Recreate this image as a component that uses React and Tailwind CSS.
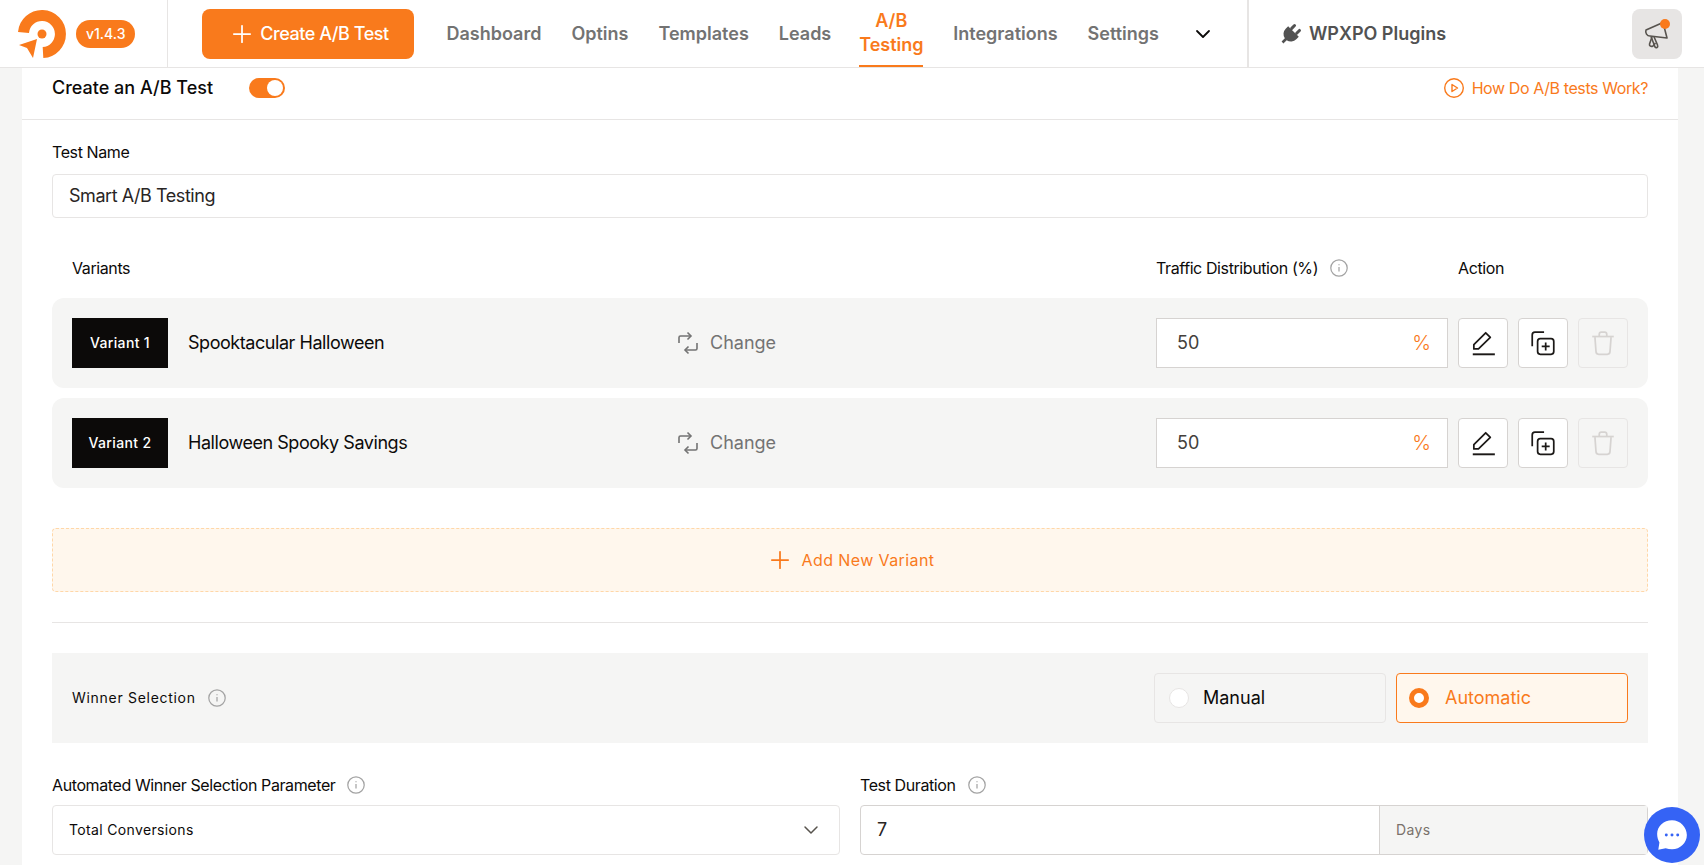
import React from 'react';
import { ChevronDown, Plus } from 'lucide-react';

const navItems = ['Dashboard', 'Optins', 'Templates', 'Leads'];

function Logo() {
  return (
    <svg viewBox="0 0 48 48" className="size-12 shrink-0">
      <path d="M5.5 22.5A18.5 18.5 0 1 1 25 42.5" fill="none" stroke="#f97a1c" strokeWidth="11" />
      <circle cx="24" cy="24" r="4.5" fill="#f97a1c" />
      <path d="M19 29L1 35L9 38L15 48Z" fill="#f97a1c" />
    </svg>
  );
}

function PlugIcon() {
  return (
    <svg viewBox="0 0 24 24" className="size-6 shrink-0 text-neutral-600" fill="currentColor">
      <g transform="rotate(45 12 12)">
        <rect x="7" y="2" width="3" height="7" rx="1.5" />
        <rect x="14" y="2" width="3" height="7" rx="1.5" />
        <path d="M4.5 8.5h15v3.5a7.5 7.5 0 0 1-6.2 7.4V24h-2.6v-4.6A7.5 7.5 0 0 1 4.5 12Z" />
      </g>
    </svg>
  );
}

function MegaphoneIcon() {
  return (
    <svg viewBox="0 0 28 30" className="w-7 h-8" fill="none" stroke="#57534e" strokeWidth="1.6" strokeLinejoin="round">
      <path d="M3 11L20 3.5L24 19L7 17C4 17 2 14 3 11Z" />
      <path d="M8 17.5L12 28C13 29.5 15.5 28.5 14.5 26L11 17.8" />
      <path d="M9 18L6.5 25C6.2 27 8 28 10 27L12.5 24" />
    </svg>
  );
}

function InfoIcon() {
  return (
    <svg viewBox="0 0 16 16" className="size-4.5 shrink-0" fill="none" stroke="#a3a3a3" strokeWidth="1.1">
      <circle cx="8" cy="8" r="7.3" />
      <path d="M8 7.200v4" />
      <path d="M8 4.600v.9" />
    </svg>
  );
}

function SwapIcon() {
  return (
    <svg viewBox="0 0 20 24" className="w-5 h-6 shrink-0" fill="none" stroke="#737373" strokeWidth="1.6">
      <path d="M1 12V6.500C1 5.500 1.500 5 2.500 5H13" />
      <path d="M9.500 1.500L13 5L9.500 8.500" />
      <path d="M19 12v5.500c0 1-.5 1.500-1.500 1.500H7" />
      <path d="M10.500 15.500L7 19L10.500 22.500" />
    </svg>
  );
}

function PencilIcon() {
  return (
    <svg viewBox="-1 -1 26 26" className="size-7" fill="none" stroke="#1c1917" strokeWidth="1.6" strokeLinejoin="round">
      <path d="M3.500 17.500V13.500L14.500 2.500L18.800 6.800L7.800 17.500Z" />
      <path d="M2.500 22.500H23" strokeWidth="1.800" />
    </svg>
  );
}

function CopyPlusIcon() {
  return (
    <svg viewBox="-1 -1 26 26" className="size-7" fill="none" stroke="#1c1917" strokeWidth="1.6">
      <path d="M2 15V4.500A2.500 2.500 0 0 1 4.500 2H13" />
      <rect x="7" y="8" width="15" height="14.500" rx="2.500" />
      <path d="M14.500 11.500v7.500M10.800 15.200h7.400" />
    </svg>
  );
}

function TrashIcon() {
  return (
    <svg viewBox="-1 -1 26 26" className="size-7" fill="none" stroke="#d6d3d1" strokeWidth="1.6">
      <path d="M2 6h20" />
      <path d="M8.500 6V4a2 2 0 0 1 2-2h3a2 2 0 0 1 2 2v2" />
      <path d="M4.500 6.500l1 13.500a2.500 2.500 0 0 0 2.500 2.500h8a2.500 2.500 0 0 0 2.500-2.500l1-13.500" />
    </svg>
  );
}

function VariantRow({ label, name }) {
  return (
    <div className="flex items-center bg-stone-100 rounded-xl px-5 h-22.5">
      <div className="flex-1 flex items-center gap-5">
        <div className="w-24 h-12.5 bg-stone-950 text-white text-sm font-medium tracking-wide flex items-center justify-center">
          {label}
        </div>
        <span className="text-lg tracking-tight text-stone-950">{name}</span>
      </div>
      <div className="w-120 flex items-center gap-3 pl-0.5 text-lg text-neutral-500">
        <SwapIcon />
        Change
      </div>
      <div className="w-118 flex gap-2.5">
        <div className="flex-1 h-12.5 bg-white border border-stone-300 flex items-center justify-between pl-5 pr-4 text-lg text-stone-700">
          50
          <span className="text-xl font-light text-[#f97a1c]">%</span>
        </div>
        <button className="size-12.5 bg-white border border-stone-300 rounded-sm flex items-center justify-center">
          <PencilIcon />
        </button>
        <button className="size-12.5 bg-white border border-stone-300 rounded-sm flex items-center justify-center">
          <CopyPlusIcon />
        </button>
        <button className="size-12.5 border border-stone-200 rounded-sm flex items-center justify-center">
          <TrashIcon />
        </button>
      </div>
    </div>
  );
}

export default function App() {
  return (
    <div className="relative flex flex-col h-screen overflow-hidden bg-stone-100 font-['Inter',sans-serif] text-stone-950">
      <header className="flex items-center shrink-0 h-17 bg-white border-b border-stone-200">
        <div className="flex items-center gap-2.5 h-full pl-4.5 pr-8 border-r border-stone-200">
          <Logo />
          <span className="bg-[#f97a1c] text-white text-sm font-medium rounded-full px-2.5 py-1">v1.4.3</span>
        </div>
        <button className="ml-8.5 w-53 h-12.5 bg-[#f97a1c] text-white text-lg font-medium tracking-tight rounded-lg flex items-center justify-center gap-1">
          <Plus className="size-7" strokeWidth={1.5} />
          Create A/B Test
        </button>
        <nav className="ml-8 flex items-center gap-7.5 h-full text-lg font-semibold text-neutral-500">
          {navItems.map((item) => (
            <a key={item}>{item}</a>
          ))}
          <a className="-ml-0.5 flex flex-col justify-center h-full w-16 text-center leading-6 text-[#f97a1c] border-b-2 border-[#f97a1c]">
            <span>A/B</span>
            <span>Testing</span>
          </a>
          <a>Integrations</a>
          <a>Settings</a>
          <ChevronDown className="ml-0.5 size-6 text-stone-950" strokeWidth={1.8} />
        </nav>
        <div className="ml-8 flex items-center gap-1.5 h-full pl-7.5 border-l-2 border-stone-200 text-lg font-semibold text-neutral-600">
          <PlugIcon />
          WPXPO Plugins
        </div>
        <div className="relative ml-auto mr-5.5 size-12.5 bg-stone-200 rounded-lg flex items-center justify-center">
          <MegaphoneIcon />
          <span className="absolute top-2.5 right-3 size-2.5 rounded-full bg-[#f97a1c]"></span>
        </div>
      </header>

      <main className="flex-1 ml-5.5 mr-6.5 bg-white">
        <div className="flex items-center justify-between h-13 pb-3 px-7.5 border-b border-stone-200">
          <div className="flex items-center gap-9">
            <span className="text-lg font-medium">Create an A/B Test</span>
            <span className="w-9 h-5 rounded-full bg-[#f97a1c] flex items-center justify-end pr-0.5">
              <span className="size-4 rounded-full bg-white"></span>
            </span>
          </div>
          <a className="flex items-center gap-2 text-base tracking-tight text-[#f97a1c]">
            <svg viewBox="0 0 20 20" className="size-5" fill="none" stroke="currentColor" strokeWidth="1.4">
              <circle cx="10" cy="10" r="9.300" />
              <path d="M8 6.500L13.500 10L8 13.500Z" strokeLinejoin="round" />
            </svg>
            How Do A/B tests Work?
          </a>
        </div>

        <div className="px-7.5 pt-5.5">
          <label className="block text-base tracking-tight leading-5 mb-3">Test Name</label>
          <div className="h-11 border border-stone-200 rounded-sm flex items-center px-4 text-lg tracking-tight text-stone-800">
            Smart A/B Testing
          </div>

          <div className="flex items-center px-5 mt-10 mb-5 h-5 text-base tracking-tight">
            <span className="flex-1">Variants</span>
            <div className="w-118 flex items-center">
              <span className="flex items-center gap-3 w-75.5">
                Traffic Distribution (%)
                <InfoIcon />
              </span>
              <span>Action</span>
            </div>
          </div>

          <div className="flex flex-col gap-2.5">
            <VariantRow label="Variant 1" name="Spooktacular Halloween" />
            <VariantRow label="Variant 2" name="Halloween Spooky Savings" />
          </div>

          <button className="mt-10 w-full h-16 bg-orange-50 border border-dashed border-orange-200 rounded-sm flex items-center justify-center gap-2 text-base tracking-wide text-[#f97a1c]">
            <Plus className="size-7" strokeWidth={1.5} />
            Add New Variant
          </button>

          <div className="mt-7.5 border-t border-stone-200"></div>

          <div className="mt-7.5 h-22.5 bg-stone-100 flex items-center justify-between px-5">
            <span className="flex items-center gap-3 text-sm tracking-wider">
              Winner Selection
              <InfoIcon />
            </span>
            <div className="flex gap-2.5">
              <div className="w-58 h-12.5 border border-stone-200 rounded-sm flex items-center gap-3.5 px-3.5 text-lg">
                <span className="size-5 rounded-full bg-white border border-stone-200"></span>
                Manual
              </div>
              <div className="w-58 h-12.5 bg-orange-50 border border-[#f97a1c] rounded-sm flex items-center gap-4 px-3 text-lg text-[#f97a1c]">
                <span className="size-5 rounded-full bg-white border-[5px] border-[#f97a1c]"></span>
                Automatic
              </div>
            </div>
          </div>

          <div className="mt-8 grid grid-cols-2 gap-5 text-sm tracking-wide">
            <div>
              <label className="flex items-center gap-3 h-5 mb-2.5 text-base tracking-tight">
                Automated Winner Selection Parameter
                <InfoIcon />
              </label>
              <div className="h-12.5 border border-stone-200 rounded-sm flex items-center justify-between px-4">
                Total Conversions
                <ChevronDown className="size-6 text-stone-600" strokeWidth={1.5} />
              </div>
            </div>
            <div>
              <label className="flex items-center gap-3 h-5 mb-2.5 text-base tracking-tight">
                Test Duration
                <InfoIcon />
              </label>
              <div className="h-12.5 border border-stone-300 rounded-sm flex">
                <div className="flex-1 flex items-center px-4 text-lg text-stone-800">7</div>
                <div className="w-67 bg-stone-100 border-l border-stone-300 flex items-center px-4 text-stone-500">Days</div>
              </div>
            </div>
          </div>
        </div>
      </main>

      <div className="absolute right-1 bottom-0.5 size-14 rounded-full bg-[#3563f5] flex items-center justify-center">
        <svg viewBox="0 0 28 28" className="size-8">
          <path d="M14 1C6.800 1 1 6.200 1 13c0 3 .8 5.500 2 7.500L2 27l6.500-1.500c1.700.7 3.500 1 5.500 1 7.200 0 13-5.600 13-12.500S21.200 1 14 1Z" fill="#fff" />
          <circle cx="9" cy="14" r="1.300" fill="#3563f5" />
          <circle cx="14" cy="14" r="1.300" fill="#3563f5" />
          <circle cx="19" cy="14" r="1.300" fill="#3563f5" />
        </svg>
      </div>
    </div>
  );
}
